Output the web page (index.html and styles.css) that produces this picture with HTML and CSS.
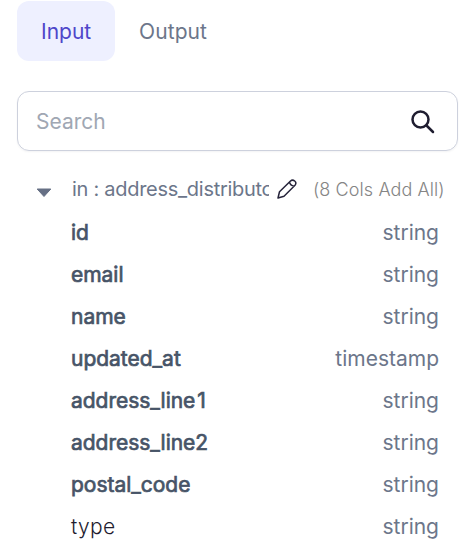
FILE: index.html
```html
<!DOCTYPE html>
<html lang="en">
<head>
<meta charset="utf-8">
<title>Columns</title>
<link rel="stylesheet" href="styles.css">
</head>
<body>
<main class="panel">
  <nav class="tabs"><button class="tab active">Input</button><button class="tab">Output</button></nav>
  <div class="search"><span>Search</span>
    <svg class="search-icon" viewBox="0 0 26 26"><circle cx="10.500" cy="10.500" r="8"/><path d="M16.500 16.500l6.500 6.500"/></svg>
  </div>
  <div class="group">
    <svg class="caret" viewBox="0 0 16 10"><path d="M1.200 1h13.600L8 8.500z"/></svg>
    <span class="group-name">in : address_distributor</span>
    <svg class="pencil" viewBox="0 0 20 20"><path d="M1 19L2.500 12.800 13.500 2Q15.500 .2 17.700 2T18 6.300L7 17.300zM12.500 3.200q.8 3.500 4.500 4"/></svg>
    <span class="add-all">(8 Cols Add All)</span>
  </div>
  <ul class="columns">
    <li><b>id</b><span>string</span></li>
    <li><b>email</b><span>string</span></li>
    <li><b>name</b><span>string</span></li>
    <li><b>updated_at</b><span>timestamp</span></li>
    <li><b>address_line<span class="one">1</span></b><span>string</span></li>
    <li><b>address_line2</b><span>string</span></li>
    <li><b>postal_code</b><span>string</span></li>
    <li><b class="plain">type</b><span>string</span></li>
  </ul>
</main>
</body>
</html>
```
FILE: styles.css
```css
* { box-sizing: border-box; }
body { margin: 0; background: #fff; font-family: Inter, sans-serif; color: #667085; overflow: hidden; }
.panel { width: 470px; height: 559px; padding: 1px 12px 0 17px; overflow: hidden; }
.tabs { display: flex; height: 60px; }
.tab { border: 0; background: none; border-radius: 12px; padding: 0 24px; font: 400 21px Inter, sans-serif; color: #6c768a; letter-spacing: .1px; }
.tab.active { width: 98px; background: #eef0ff; color: #4f46ca; letter-spacing: 0; }
.search { display: flex; align-items: center; justify-content: space-between; height: 60px; margin-top: 30px; padding: 0 21px 0 18px; border: 1px solid #cdd1dd; border-radius: 12px; font-size: 21px; color: #a0a7b3; box-shadow: 0 1px 2px rgba(16, 24, 40, .05); }
.search-icon { width: 26px; height: 26px; margin-top: 1px; fill: none; stroke: #1f1d30; stroke-width: 2.5; stroke-linecap: round; }
.group { display: flex; align-items: center; height: 60px; margin-top: 8px; padding-left: 19px; }
.caret { width: 16px; height: 10px; margin: 7px 20px 0 0; fill: #667085; stroke: #667085; stroke-linejoin: round; }
.group-name { width: 197px; overflow: hidden; white-space: nowrap; font-size: 20px; letter-spacing: -.28px; color: #6c768a; }
.pencil { width: 20px; height: 20px; margin: 0 16px 0 8px; fill: none; stroke: #25233a; stroke-width: 1.5; stroke-linejoin: round; }
.add-all { font-size: 18px; font-weight: 300; white-space: nowrap; color: #858585; letter-spacing: .09px; }
.columns { list-style: none; margin: -8px 0 0; padding: 0 19px 0 54px; }
.columns li { display: flex; align-items: center; justify-content: space-between; height: 42px; padding-top: 1px; font-size: 21px; color: #6c768a; }
.columns b { font-weight: 400; color: #475467; -webkit-text-stroke: .7px #475467; letter-spacing: -.02px; }
.columns .one { margin-left: 2px; }
.columns .plain { font-weight: 300; color: #1f1d30; -webkit-text-stroke: 0; letter-spacing: .3px; }
```
